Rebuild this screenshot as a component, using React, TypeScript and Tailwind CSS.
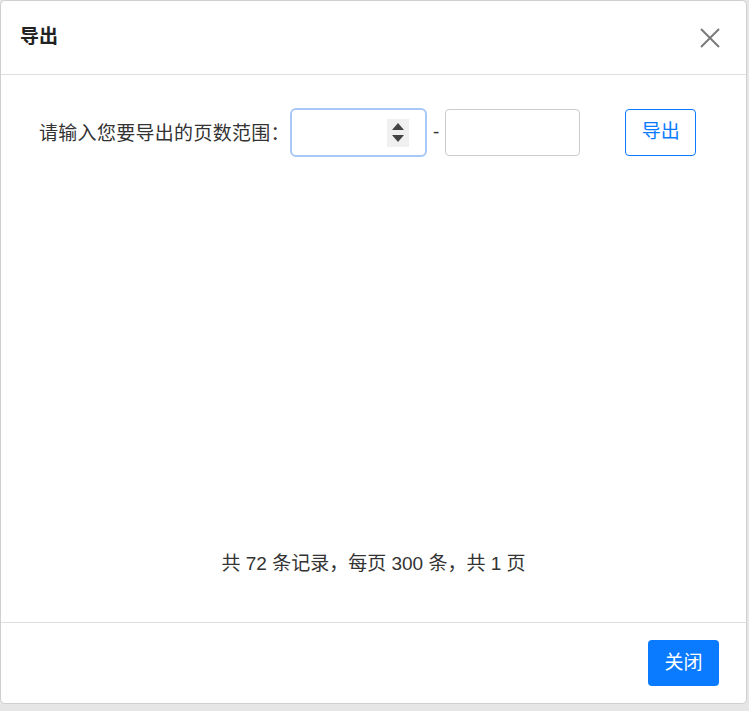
import { FC } from "react";

const Spinner: FC = () => (
  <div className="flex h-[28px] w-[22px] flex-col items-center justify-center gap-[5px] bg-[#f0f0f0]">
    <svg width="12" height="7" viewBox="0 0 12 7">
      <path d="M6 0L12 7H0Z" fill="#444" />
    </svg>
    <svg width="12" height="7" viewBox="0 0 12 7">
      <path d="M0 0H12L6 7Z" fill="#444" />
    </svg>
  </div>
);

export default function App() {
  return (
    <div
      className="h-[711px] w-[749px] bg-[#e6e6e6] text-[#333]"
      style={{ fontFamily: '"Liberation Sans", "Noto Sans CJK SC", sans-serif' }}
    >
      <div className="flex h-[704px] w-[747px] flex-col rounded-[5px] border border-[#cfcfcf] bg-white">
        <div className="flex h-[74px] items-center justify-between border-b border-[#dedede] pl-[19px] pr-[26px]">
          <h5 className="text-[19px] font-bold text-[#222]">导出</h5>
          <button className="text-[#777]">
            <svg width="20" height="20" viewBox="0 0 20 20">
              <path d="M1 1L19 19M19 1L1 19" stroke="#7a7a7a" strokeWidth="2" />
            </svg>
          </button>
        </div>

        <div className="flex flex-1 flex-col justify-between pb-[44px] pt-[33px]">
          <div className="flex items-center pl-[38px]">
            <span className="pt-[3px] text-[19px] tracking-[0.3px]">请输入您要导出的页数范围：</span>
            <div className="flex h-[49px] w-[137px] items-center justify-end rounded-[6px] border-2 border-[#a8c8f8] pr-[16px]">
              <Spinner />
            </div>
            <span className="mx-[6px] text-[19px]">-</span>
            <div className="h-[47px] w-[135px] rounded-[4px] border border-[#cccccc]" />
            <button className="ml-[45px] h-[47px] w-[71px] rounded-[4px] border border-[#0a7bff] text-[19px] text-[#0a7bff]">
              导出
            </button>
          </div>

          <p className="text-center text-[19px]">共 72 条记录，每页 300 条，共 1 页</p>
        </div>

        <div className="flex h-[81px] items-center justify-end border-t border-[#dedede] pr-[27px]">
          <button className="h-[46px] w-[71px] rounded-[4px] bg-[#0a7bff] text-[19px] text-white">
            关闭
          </button>
        </div>
      </div>
    </div>
  );
}
